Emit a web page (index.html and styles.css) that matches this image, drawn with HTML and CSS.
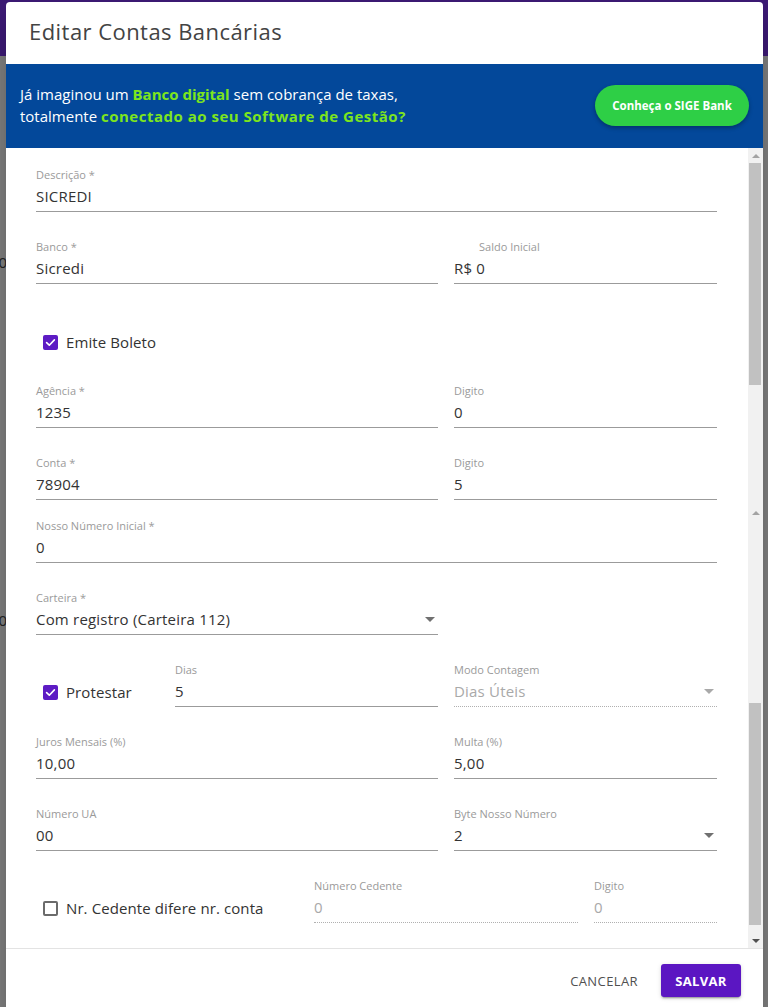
FILE: index.html
```html
<!DOCTYPE html>
<html lang="pt-BR">
<head>
<meta charset="utf-8">
<title>Editar Contas Bancárias</title>
<link rel="stylesheet" href="styles.css">
</head>
<body>
<div class="appbar"></div>
<div class="page">
  <div class="bgline bg1">00</div>
  <div class="bgline bg2">00</div>
</div>

<div class="dialog">
  <div class="dlg-header">Editar Contas Bancárias</div>

  <div class="banner">
    <div class="banner-text">
      Já imaginou um <b class="hl">Banco digital</b> sem cobrança de taxas,<br>
      totalmente <b class="hl hl-wide">conectado ao seu Software de Gestão?</b>
    </div>
    <button class="sige-btn">Conheça o SIGE Bank</button>
  </div>

  <div class="content">
    <div class="form">
      <div class="row r-first">
        <div class="field">
          <label class="lbl">Descrição *</label>
          <div class="val">SICREDI</div>
        </div>
      </div>

      <div class="row cols-2">
        <div class="field">
          <label class="lbl">Banco *</label>
          <div class="val">Sicredi</div>
        </div>
        <div class="field">
          <label class="lbl lbl-shift">Saldo Inicial</label>
          <div class="val">R$ 0</div>
        </div>
      </div>

      <div class="row r-check">
        <div class="check-line">
          <span class="cbox on"><svg viewBox="0 0 15 15" width="15" height="15"><polyline points="3.6,7.6 6.3,10.2 11.4,4.9" fill="none" stroke="#fff" stroke-width="1.6" stroke-linecap="round" stroke-linejoin="round"/></svg></span>
          <span class="ctext">Emite Boleto</span>
        </div>
      </div>

      <div class="row cols-2 r-after-check">
        <div class="field">
          <label class="lbl">Agência *</label>
          <div class="val">1235</div>
        </div>
        <div class="field">
          <label class="lbl">Digito</label>
          <div class="val">0</div>
        </div>
      </div>

      <div class="row cols-2">
        <div class="field">
          <label class="lbl">Conta *</label>
          <div class="val">78904</div>
        </div>
        <div class="field">
          <label class="lbl">Digito</label>
          <div class="val">5</div>
        </div>
      </div>

      <div class="row r-tight">
        <div class="field">
          <label class="lbl">Nosso Número Inicial *</label>
          <div class="val">0</div>
        </div>
      </div>

      <div class="row cols-2">
        <div class="field">
          <label class="lbl">Carteira *</label>
          <div class="val select">Com registro (Carteira 112)<span class="caret"></span></div>
        </div>
        <div></div>
      </div>

      <div class="row cols-3">
        <div class="check-line cell-check">
          <span class="cbox on"><svg viewBox="0 0 15 15" width="15" height="15"><polyline points="3.6,7.6 6.3,10.2 11.4,4.9" fill="none" stroke="#fff" stroke-width="1.6" stroke-linecap="round" stroke-linejoin="round"/></svg></span>
          <span class="ctext">Protestar</span>
        </div>
        <div class="field">
          <label class="lbl">Dias</label>
          <div class="val">5</div>
        </div>
        <div class="field">
          <label class="lbl">Modo Contagem</label>
          <div class="val select disabled">Dias Úteis<span class="caret"></span></div>
        </div>
      </div>

      <div class="row cols-2">
        <div class="field">
          <label class="lbl">Juros Mensais (%)</label>
          <div class="val">10,00</div>
        </div>
        <div class="field">
          <label class="lbl">Multa (%)</label>
          <div class="val">5,00</div>
        </div>
      </div>

      <div class="row cols-2">
        <div class="field">
          <label class="lbl">Número UA</label>
          <div class="val">00</div>
        </div>
        <div class="field">
          <label class="lbl">Byte Nosso Número</label>
          <div class="val select">2<span class="caret"></span></div>
        </div>
      </div>

      <div class="row cols-ced">
        <div class="check-line cell-check">
          <span class="cbox"></span>
          <span class="ctext">Nr. Cedente difere nr. conta</span>
        </div>
        <div class="field">
          <label class="lbl">Número Cedente</label>
          <div class="val disabled">0</div>
        </div>
        <div class="field">
          <label class="lbl">Digito</label>
          <div class="val disabled">0</div>
        </div>
      </div>
    </div>

    <div class="sbar">
      <span class="sb-arrow up"></span>
      <span class="sb-thumb"></span>
      <span class="sb-space s1"></span>
      <span class="sb-arrow up"></span>
      <span class="sb-space s2"></span>
      <span class="sb-thumb"></span>
      <span class="sb-space s3"></span>
      <span class="sb-arrow down"></span>
    </div>
  </div>

  <div class="footer">
    <button class="btn-flat">Cancelar</button>
    <button class="btn-primary">Salvar</button>
  </div>
</div>
</body>
</html>
```

FILE: styles.css
```css
* { box-sizing: border-box; }

html, body {
  margin: 0;
  height: 1007px;
  overflow: hidden;
}

body {
  background: #7e7e7e;
  font-family: "Open Sans", "Liberation Sans", sans-serif;
  color: #333;
}

.appbar {
  height: 56px;
  background: #3c1a74;
}

.page {
  padding-top: 196px;
  font-size: 15px;
  color: #222;
}

.bgline {
  margin-left: -10px;
  height: 20px;
  line-height: 20px;
}

.bg2 { margin-top: 338px; }

.dialog {
  position: absolute;
  top: 2px;
  left: 6px;
  width: 757px;
  height: 1011px;
  background: #fff;
  border-radius: 4px 4px 0 0;
  box-shadow: 0 11px 15px -7px rgba(0,0,0,.2), 0 24px 38px 3px rgba(0,0,0,.14);
  display: flex;
  flex-direction: column;
  overflow: hidden;
}

.dlg-header {
  height: 62px;
  flex: none;
  display: flex;
  align-items: center;
  padding: 0 0 5px 23px;
  font-size: 22px;
  color: #434343;
  letter-spacing: 0.45px;
}

.banner {
  height: 84px;
  flex: none;
  background: #03489a;
  display: flex;
  align-items: center;
  justify-content: space-between;
  padding: 0 14px 2px 14px;
}

.banner-text {
  color: #fff;
  font-size: 15px;
  line-height: 22px;
}

.hl {
  color: #7de51d;
  font-weight: 700;
}

.hl-wide { letter-spacing: 0.5px; }

.sige-btn {
  width: 154px;
  height: 41px;
  border: none;
  border-radius: 21px;
  background: #2ecf46;
  color: #fff;
  font-family: inherit;
  font-size: 11.5px;
  font-weight: 700;
  box-shadow: 0 2px 4px rgba(0,0,0,.3);
}

.content {
  height: 800px;
  flex: none;
  display: flex;
}

.form {
  flex: 1;
  padding: 20px 31px 0 30px;
}

.row { margin-top: 28px; }
.row.r-first { margin-top: 0; }
.row.r-check { margin-top: 48px; }
.row.r-after-check { margin-top: 32px; }
.row.r-tight { margin-top: 19px; }

.cols-2 {
  display: grid;
  grid-template-columns: 402px 1fr;
  column-gap: 16px;
}

.cols-3 {
  display: grid;
  grid-template-columns: 123px 263px 1fr;
  column-gap: 16px;
}

.cols-ced {
  display: grid;
  grid-template-columns: 262px 264px 1fr;
  column-gap: 16px;
}

.field {
  display: flex;
  flex-direction: column;
  min-width: 0;
}

.lbl {
  font-size: 11px;
  line-height: 14px;
  color: #9a9a9a;
  margin-bottom: 5px;
  white-space: nowrap;
}

.lbl-shift { padding-left: 25px; }

.val {
  font-size: 15px;
  line-height: 19px;
  color: #333;
  padding-bottom: 5px;
  border-bottom: 1px solid #9b9b9b;
  white-space: nowrap;
  letter-spacing: 0.2px;
}

.val.select {
  display: flex;
  align-items: center;
  justify-content: space-between;
}

.caret {
  width: 0;
  height: 0;
  border-left: 5px solid transparent;
  border-right: 5px solid transparent;
  border-top: 5px solid #707070;
  margin-right: 3px;
}

.val.disabled {
  color: #a9a9a9;
  border-bottom: 1px dotted #b0b0b0;
}

.val.disabled .caret { border-top-color: #a9a9a9; }

.check-line {
  display: flex;
  align-items: center;
  height: 20px;
}

.cell-check {
  align-self: end;
  margin-bottom: 5px;
}

.cbox {
  width: 15px;
  height: 15px;
  margin-left: 7px;
  border: 2px solid #6b6b6b;
  border-radius: 2px;
  flex: none;
  display: block;
}

.cbox.on {
  background: #5d1bc4;
  border: none;
}

.cbox svg { display: block; }

.ctext {
  margin-left: 8px;
  font-size: 15px;
  color: #333;
  white-space: nowrap;
  letter-spacing: 0.1px;
}

.sbar {
  width: 15px;
  flex: none;
  background: #f1f1f1;
  display: flex;
  flex-direction: column;
}

.sb-arrow {
  height: 15px;
  flex: none;
  display: flex;
  align-items: center;
  justify-content: center;
}

.sb-arrow::before {
  content: "";
  width: 0;
  height: 0;
  border-left: 4px solid transparent;
  border-right: 4px solid transparent;
}

.sb-arrow.up::before { border-bottom: 4px solid #a3a3a3; }
.sb-arrow.down::before { border-top: 4px solid #505050; }

.sb-thumb {
  height: 222px;
  flex: none;
  margin: 0 2px 0 1px;
  background: #c1c1c1;
}

.sb-space { flex: none; }
.sb-space.s1 { height: 120px; }
.sb-space.s2 { height: 183px; }
.sb-space.s3 { height: 8px; }

.footer {
  flex: none;
  height: 64px;
  border-top: 1px solid #e3e3e3;
  display: flex;
  align-items: center;
  justify-content: flex-end;
  padding-right: 22px;
  gap: 15px;
}

.btn-flat {
  border: none;
  background: transparent;
  font-family: inherit;
  font-size: 13px;
  text-transform: uppercase;
  color: #505050;
  letter-spacing: 0.4px;
  height: 33px;
  padding: 0 8px;
}

.btn-primary {
  width: 80px;
  height: 33px;
  border: none;
  border-radius: 3px;
  background: #5b16c2;
  color: #fff;
  font-family: inherit;
  font-size: 13px;
  font-weight: 700;
  text-transform: uppercase;
  letter-spacing: 0.3px;
  box-shadow: 0 3px 1px -2px rgba(0,0,0,.2), 0 2px 2px 0 rgba(0,0,0,.14), 0 1px 5px 0 rgba(0,0,0,.12);
}
```
